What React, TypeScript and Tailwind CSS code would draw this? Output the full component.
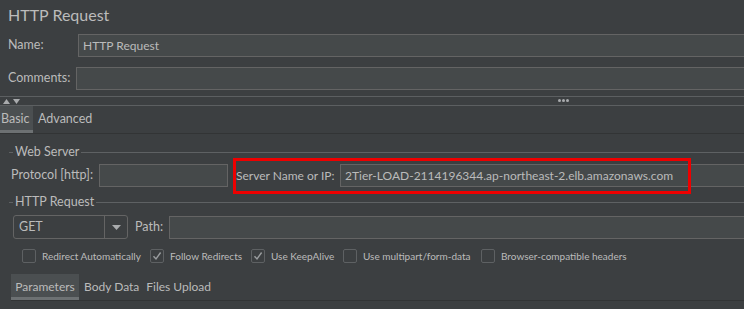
import React from 'react';

const font = { fontFamily: 'Lato, "Noto Sans", sans-serif' };

function Field({ value = '', className = '' }: { value?: string; className?: string }) {
  return (
    <div
      className={`h-[23px] bg-[#45494a] border border-[#646464] flex items-center pl-[4px] text-[12px] text-[#bbbbbb] whitespace-nowrap overflow-hidden ${className}`}
    >
      {value}
    </div>
  );
}

function GroupTitle({ label }: { label: string }) {
  return (
    <div className="flex items-center h-[16px] pl-[9px]">
      <div className="w-[4px] h-px bg-[#5e6163]" />
      <span className="px-[2px] text-[12.5px] text-[#bbbbbb] leading-none whitespace-nowrap">{label}</span>
      <div className="flex-1 h-px bg-[#5e6163]" />
    </div>
  );
}

function Check({ checked, label, width }: { checked?: boolean; label: string; width: string }) {
  return (
    <div className={`flex items-center gap-[6px] shrink-0 ${width}`}>
      <div className="w-[14px] h-[14px] shrink-0 border border-[#5e6163] rounded-[2px] bg-[#3c3f41] flex items-center justify-center">
        {checked && (
          <svg width="10" height="10" viewBox="0 0 10 10">
            <path d="M1.5 5.2 L4 8 L8.6 1.5" fill="none" stroke="#9a9d9f" strokeWidth="1.4" />
          </svg>
        )}
      </div>
      <span className="text-[10px] leading-none text-[#bbbbbb] whitespace-nowrap">{label}</span>
    </div>
  );
}

export default function App() {
  return (
    <div className="w-[744px] h-[309px] bg-[#3c3f41] overflow-hidden text-[#bbbbbb] leading-none" style={font}>
      {/* title */}
      <div className="h-[34px] pl-[8px] pt-[7px] text-[16px]">HTTP Request</div>

      {/* name / comments */}
      <div className="flex items-center text-[12.5px]">
        <div className="w-[78px] shrink-0 pl-[8px]">Name:</div>
        <Field value="HTTP Request" className="flex-1 mr-[-2px]" />
      </div>
      <div className="flex items-center mt-[10px] text-[12.5px]">
        <div className="w-[76px] shrink-0 pl-[8px] whitespace-nowrap">Comments:</div>
        <Field className="flex-1 mr-[-2px]" />
      </div>

      {/* splitter */}
      <div className="mt-[6px] h-[10px] border-t border-b border-[#5c5f61] flex items-center relative">
        <div className="flex items-center gap-[3px] pl-[3px]">
          <svg width="7" height="5" viewBox="0 0 7 5"><path d="M0 5 L3.5 0 L7 5Z" fill="#a9abad" /></svg>
          <svg width="7" height="5" viewBox="0 0 7 5"><path d="M0 0 L3.5 5 L7 0Z" fill="#a9abad" /></svg>
        </div>
        <div className="absolute left-[558px] top-[2px] flex gap-[1px]">
          <div className="w-[3px] h-[3px] rounded-full bg-[#a9abad]" />
          <div className="w-[3px] h-[3px] rounded-full bg-[#a9abad]" />
          <div className="w-[3px] h-[3px] rounded-full bg-[#a9abad]" />
        </div>
      </div>

      {/* tabs */}
      <div className="flex h-[28px] border-b border-[#323435] text-[12.5px]">
        <div className="w-[33px] bg-[#4b4f51] border-b-[3px] border-[#6d7173] flex items-center pl-[1px] pt-[2px]">Basic</div>
        <div className="flex items-center pl-[5px]">Advanced</div>
      </div>

      {/* web server */}
      <div className="mt-[10px]">
        <GroupTitle label="Web Server" />
      </div>
      <div className="flex items-center mt-[4px] text-[12.5px]">
        <div className="w-[99px] shrink-0 pl-[11px] whitespace-nowrap">Protocol [http]:</div>
        <Field className="w-[129px] shrink-0" />
        <div className="flex-1 flex items-center relative ml-[6px]">
          <div className="w-[106px] shrink-0 pl-[2px] whitespace-nowrap text-[12px]">Server Name or IP:</div>
          <Field value="2Tier-LOAD-2114196344.ap-northeast-2.elb.amazonaws.com" className="flex-1 mr-[-2px]" />
          <div className="absolute left-[-1px] top-[-6px] w-[458px] h-[36px] border-[3px] border-[#ee0000] pointer-events-none" />
        </div>
      </div>

      {/* http request */}
      <div className="mt-[7px]">
        <GroupTitle label="HTTP Request" />
      </div>
      <div className="flex items-center mt-[5px] pl-[13px] text-[12.5px]">
        <div className="w-[115px] shrink-0 h-[24px] border border-[#646464] rounded-[3px] flex items-stretch bg-[#3c3f41]">
          <div className="flex-1 flex items-center pl-[5px]">GET</div>
          <div className="w-[23px] border-l border-[#646464] flex items-center justify-center">
            <svg width="9" height="5" viewBox="0 0 9 5"><path d="M0 0 L9 0 L4.5 5Z" fill="#a9abad" /></svg>
          </div>
        </div>
        <div className="w-[41px] shrink-0 pl-[7px]">Path:</div>
        <Field className="flex-1 mr-[-2px]" />
      </div>

      {/* options */}
      <div className="flex items-center mt-[9px] pl-[22px] h-[15px]">
        <Check width="w-[128px]" label="Redirect Automatically" />
        <Check width="w-[101px]" checked label="Follow Redirects" />
        <Check width="w-[92px]" checked label="Use KeepAlive" />
        <Check width="w-[138px]" label="Use multipart/form-data" />
        <Check width="w-[160px]" label="Browser-compatible headers" />
      </div>

      {/* bottom tabs */}
      <div className="flex h-[27px] mt-[11px] ml-[11px] border-b border-[#323435] text-[12px]">
        <div className="w-[68px] bg-[#4b4f51] border-b-[3px] border-[#6d7173] flex items-center justify-center pt-[2px]">Parameters</div>
        <div className="flex items-center pl-[5px]">Body Data</div>
        <div className="flex items-center pl-[7px]">Files Upload</div>
      </div>
    </div>
  );
}
